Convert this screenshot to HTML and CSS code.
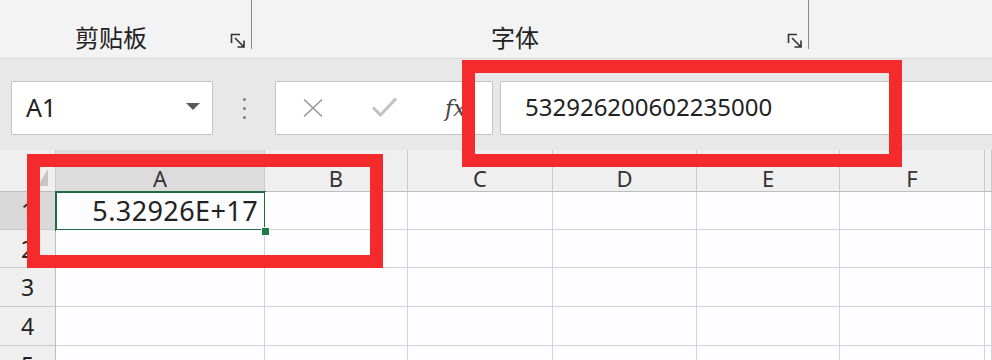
FILE: index.html
```html
<!DOCTYPE html>
<html lang="zh-CN">
<head>
<meta charset="utf-8">
<title>Excel</title>
<link rel="stylesheet" href="styles.css">
</head>
<body>
<div class="app">
  <div class="ribbon">
    <div class="rgroup g1">
      <div class="rtop"></div>
      <div class="rbottom">
        <div class="rlabel">剪贴板</div>
        <svg class="launcher" width="16" height="16" viewBox="0 0 16 16"><path d="M1.5 10V1.5H10" fill="none" stroke="#333" stroke-width="1.6"/><path d="M5 5L13.5 13.5M14 7.5V14H7.5" fill="none" stroke="#333" stroke-width="1.6"/></svg>
      </div>
    </div>
    <div class="rgroup g2">
      <div class="rtop"></div>
      <div class="rbottom">
        <div class="rlabel">字体</div>
        <svg class="launcher" width="16" height="16" viewBox="0 0 16 16"><path d="M1.5 10V1.5H10" fill="none" stroke="#333" stroke-width="1.6"/><path d="M5 5L13.5 13.5M14 7.5V14H7.5" fill="none" stroke="#333" stroke-width="1.6"/></svg>
      </div>
    </div>
    <div class="rgroup g3"></div>
  </div>

  <div class="fbar">
    <div class="namebox">
      <span class="nametext">A1</span>
      <svg class="dropdown" width="14" height="7" viewBox="0 0 14 7"><path d="M0 0H14L7 7Z" fill="#5a5a5a"/></svg>
    </div>
    <div class="dots"><i></i><i></i><i></i></div>
    <div class="fbtns">
      <svg class="fbtn-x" width="20" height="18" viewBox="0 0 20 18"><path d="M1 0.5L19 17.5M19 0.5L1 17.5" stroke="#9a9a9a" stroke-width="1.6" fill="none"/></svg>
      <svg class="fbtn-ok" width="25" height="20" viewBox="0 0 25 20"><path d="M1 10.5L8.5 18L24 1.5" stroke="#c2c2c2" stroke-width="3" fill="none"/></svg>
      <span class="fx">fx</span>
    </div>
    <div class="finput">532926200602235000</div>
  </div>

  <div class="grid">
    <div class="hd corner"><svg class="selall" width="10" height="17" viewBox="0 0 10 17"><path d="M10 0V17H0Z" fill="#c6c6c6"/></svg></div>
    <div class="hd col sel">A</div>
    <div class="hd col">B</div>
    <div class="hd col">C</div>
    <div class="hd col">D</div>
    <div class="hd col">E</div>
    <div class="hd col">F</div>
    <div class="hd col"></div>

    <div class="rh sel">1</div>
    <div class="cell active">5.32926E+17<span class="handle"></span></div>
    <div class="cell"></div><div class="cell"></div><div class="cell"></div><div class="cell"></div><div class="cell"></div><div class="cell"></div>

    <div class="rh">2</div>
    <div class="cell"></div><div class="cell"></div><div class="cell"></div><div class="cell"></div><div class="cell"></div><div class="cell"></div><div class="cell"></div>

    <div class="rh">3</div>
    <div class="cell"></div><div class="cell"></div><div class="cell"></div><div class="cell"></div><div class="cell"></div><div class="cell"></div><div class="cell"></div>

    <div class="rh">4</div>
    <div class="cell"></div><div class="cell"></div><div class="cell"></div><div class="cell"></div><div class="cell"></div><div class="cell"></div><div class="cell"></div>

    <div class="rh">5</div>
    <div class="cell"></div><div class="cell"></div><div class="cell"></div><div class="cell"></div><div class="cell"></div><div class="cell"></div><div class="cell"></div>
  </div>

  <div class="mark mark-cell"></div>
  <div class="mark mark-formula"></div>
</div>
</body>
</html>
```

FILE: styles.css
```css
* { box-sizing: border-box; }
html, body { margin: 0; padding: 0; }
body {
  width: 992px;
  height: 360px;
  overflow: hidden;
  background: #ffffff;
  font-family: "Noto Sans", "Noto Sans CJK SC", sans-serif;
  color: #222;
}
.app {
  position: relative;
  width: 992px;
  height: 360px;
  overflow: hidden;
}

/* Ribbon */
.ribbon {
  display: flex;
  height: 59px;
  background: #f3f3f3;
  border-bottom: 1px solid #d9d9d9;
}
.rgroup {
  display: flex;
  flex-direction: column;
  height: 49px;
}
.g1 { width: 252px; padding-right: 5px; border-right: 1px solid #8c8c8c; }
.g2 { width: 557px; padding-right: 5px; border-right: 1px solid #8c8c8c; }
.g3 { flex: 1; }
.rtop { height: 25px; }
.rbottom {
  display: flex;
  align-items: flex-start;
  height: 24px;
}
.rlabel {
  flex: 1;
  text-align: center;
  font-family: "Noto Sans CJK SC", sans-serif;
  font-size: 24px;
  line-height: 24px;
  color: #222;
}
.launcher {
  flex: none;
  margin-top: 8px;
  margin-left: 8px;
}
.g2 .launcher { margin-left: 9px; }

/* Formula bar */
.fbar {
  display: flex;
  align-items: flex-start;
  height: 91px;
  padding: 22px 0 0 11px;
  background: #e8e8e8;
}
.namebox {
  display: flex;
  align-items: center;
  justify-content: space-between;
  width: 202px;
  height: 54px;
  padding: 0 12px 2px 14px;
  background: #fff;
  border: 1px solid #c4c4c4;
  border-radius: 2px;
}
.nametext {
  font-size: 25px;
  color: #222;
}
.dropdown { margin-bottom: 2px; }
.dots {
  display: flex;
  flex-direction: column;
  align-items: center;
  justify-content: center;
  gap: 6px;
  width: 62px;
  height: 54px;
}
.dots i {
  display: block;
  width: 3px;
  height: 3px;
  border-radius: 50%;
  background: #7a7a7a;
}
.fbtns {
  display: flex;
  align-items: center;
  width: 218px;
  height: 54px;
  padding-left: 27px;
  background: #fff;
  border: 1px solid #c4c4c4;
  border-radius: 2px;
}
.fbtn-x { margin-right: 49px; }
.fbtn-ok { margin-right: 48px; margin-top: -2px; }
.fx {
  font-family: "DejaVu Serif", "Liberation Serif", serif;
  font-style: italic;
  font-size: 22px;
  color: #444;
}
.finput {
  flex: 1;
  height: 54px;
  margin-left: 7px;
  margin-right: -4px;
  padding-left: 24px;
  background: #fff;
  border: 1px solid #c4c4c4;
  border-radius: 2px;
  font-size: 24px;
  line-height: 50px;
  color: #222;
}

/* Grid */
.grid {
  display: grid;
  grid-template-columns: 56px 209px 143px 145px 144px 143px 145px 1fr;
  grid-template-rows: 42px 38px 38px 39px 39px 39px;
}
.hd {
  background: #efefef;
  border-right: 1px solid #c9c9c9;
  border-bottom: 1px solid #bdbdbd;
}
.col {
  display: flex;
  align-items: flex-end;
  justify-content: center;
  padding-bottom: 0;
  font-size: 22px;
  line-height: 26px;
  color: #333;
}
.col.sel { background: #dcdcdc; }
.corner {
  display: flex;
  align-items: flex-end;
  justify-content: flex-end;
  padding: 0 7px 5px 0;
}
.rh {
  display: flex;
  align-items: center;
  justify-content: center;
  background: #efefef;
  border-right: 1px solid #bdbdbd;
  border-bottom: 1px solid #c9c9c9;
  font-size: 23px;
  color: #222;
}
.rh.sel { background: #d9d9d9; }
.cell {
  position: relative;
  background: #fdfdff;
  border-right: 1px solid #d2d2d8;
  border-bottom: 1px solid #d2d2d8;
}
.cell.active {
  display: flex;
  align-items: center;
  justify-content: flex-end;
  padding-right: 6px;
  font-size: 27px;
  letter-spacing: 0.4px;
  color: #222;
}
.cell.active::after {
  content: "";
  position: absolute;
  left: -1px;
  top: -1px;
  right: -2px;
  bottom: -2px;
  border: 2px solid #1f6b42;
}
.handle {
  position: absolute;
  right: -6px;
  bottom: -7px;
  width: 9px;
  height: 9px;
  background: #1f7a46;
  border: 1px solid #fff;
  z-index: 2;
}

/* Red annotation boxes */
.mark {
  position: absolute;
  border: 13px solid #f42a2d;
  z-index: 5;
}
.mark-cell {
  left: 27px;
  top: 154px;
  width: 356px;
  height: 114px;
}
.mark-formula {
  left: 462px;
  top: 60px;
  width: 440px;
  height: 107px;
}
```
